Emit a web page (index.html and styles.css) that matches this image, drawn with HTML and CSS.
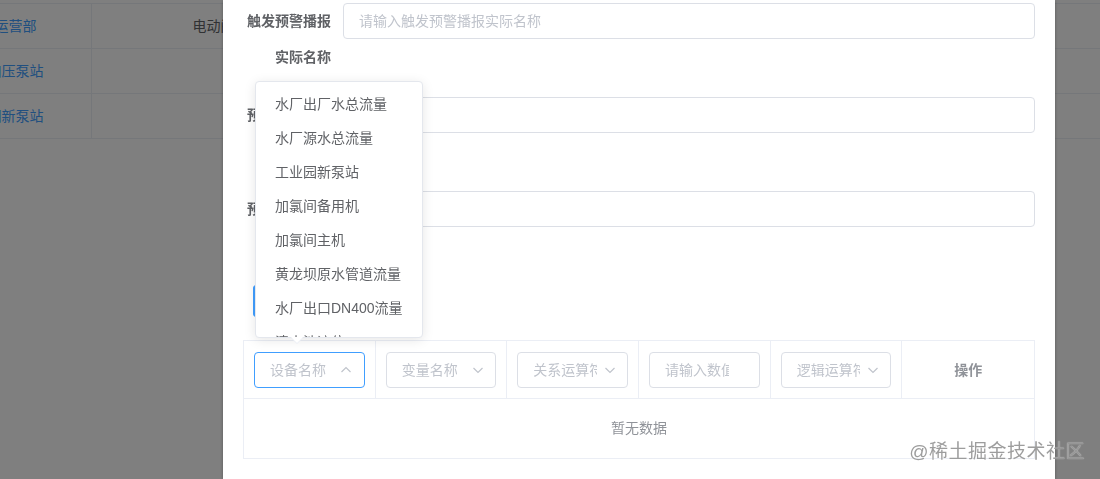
FILE: index.html
```html
<!DOCTYPE html>
<html lang="zh-CN">
<head>
<meta charset="utf-8">
<title>预警配置</title>
<link rel="stylesheet" href="styles.css">
</head>
<body>
  <div class="page">
    <div class="bg-table">
      <div class="bg-row">
        <div class="bg-cell c1 link">生产运营部</div>
        <div class="bg-cell c2">电动阀门</div>
        <div class="bg-cell c3"></div>
      </div>
      <div class="bg-row">
        <div class="bg-cell c1 link">城东加压泵站</div>
        <div class="bg-cell c2"></div>
        <div class="bg-cell c3"></div>
      </div>
      <div class="bg-row">
        <div class="bg-cell c1 link">工业园新泵站</div>
        <div class="bg-cell c2"></div>
        <div class="bg-cell c3"></div>
      </div>
    </div>
  </div>

  <div class="overlay"></div>

  <div class="dialog">
    <div class="form-item">
      <label class="label">触发预警播报实际名称</label>
      <div class="input placeholder">请输入触发预警播报实际名称</div>
    </div>
    <div class="form-item">
      <label class="label">预警恢复播报实际名称</label>
      <div class="input"></div>
    </div>
    <div class="form-item">
      <label class="label">预警持续播报实际名称</label>
      <div class="input"></div>
    </div>
    <div class="actions">
      <button class="btn">添加条件</button>
    </div>

    <div class="cond-table">
      <div class="cond-head">
        <div class="th">
          <div class="select focus"><span class="sel-text">设备名称</span>
            <span class="arrow"><svg viewBox="0 0 14 14" width="14" height="14"><polyline points="2.5,9 7,4.5 11.5,9" fill="none" stroke="#c0c4cc" stroke-width="1.2"/></svg></span>
          </div>
        </div>
        <div class="th">
          <div class="select"><span class="sel-text">变量名称</span>
            <span class="arrow"><svg viewBox="0 0 14 14" width="14" height="14"><polyline points="2.5,5 7,9.5 11.5,5" fill="none" stroke="#c0c4cc" stroke-width="1.2"/></svg></span>
          </div>
        </div>
        <div class="th">
          <div class="select"><span class="sel-text">关系运算符</span>
            <span class="arrow"><svg viewBox="0 0 14 14" width="14" height="14"><polyline points="2.5,5 7,9.5 11.5,5" fill="none" stroke="#c0c4cc" stroke-width="1.2"/></svg></span>
          </div>
        </div>
        <div class="th">
          <div class="select"><span class="sel-text">请输入数值</span></div>
        </div>
        <div class="th">
          <div class="select"><span class="sel-text">逻辑运算符</span>
            <span class="arrow"><svg viewBox="0 0 14 14" width="14" height="14"><polyline points="2.5,5 7,9.5 11.5,5" fill="none" stroke="#c0c4cc" stroke-width="1.2"/></svg></span>
          </div>
        </div>
        <div class="th op">操作</div>
      </div>
      <div class="cond-empty">暂无数据</div>
    </div>

    <div class="dropdown">
      <ul class="dropdown-list">
        <li>水厂出厂水总流量</li>
        <li>水厂源水总流量</li>
        <li>工业园新泵站</li>
        <li>加氯间备用机</li>
        <li>加氯间主机</li>
        <li>黄龙坝原水管道流量</li>
        <li>水厂出口DN400流量</li>
        <li>清水池液位</li>
      </ul>
      <span class="popper-arrow"></span>
    </div>
  </div>

  <div class="watermark">@稀土掘金技术社区</div>
</body>
</html>
```

FILE: styles.css
```css
* { box-sizing: border-box; }

html, body {
  margin: 0;
  padding: 0;
  width: 1100px;
  height: 479px;
  overflow: hidden;
  background: #fff;
  font-family: "Liberation Sans", "Noto Sans CJK SC", sans-serif;
  font-size: 14px;
  color: #606266;
}

.page {
  padding-top: 3px;
}

.bg-table {
  margin-left: -88px;
  width: 1188px;
  border-top: 1px solid #ebeef5;
}

.bg-row {
  display: flex;
  height: 45px;
  border-bottom: 1px solid #ebeef5;
}

.bg-cell {
  line-height: 44px;
  text-align: center;
  white-space: nowrap;
}

.c1 { width: 180px; border-right: 1px solid #ebeef5; }
.c2 { width: 258px; border-right: 1px solid #ebeef5; }
.c3 { flex: 1; }

.link { color: #409eff; }

.overlay {
  position: fixed;
  inset: 0;
  background: rgba(0, 0, 0, 0.5);
}

.dialog {
  position: absolute;
  left: 223px;
  top: 0;
  width: 832px;
  height: 479px;
  background: #fff;
  box-shadow: 0 1px 3px rgba(0, 0, 0, 0.3);
  padding: 3px 20px 0;
}

.form-item {
  display: flex;
  align-items: flex-start;
  margin-bottom: 22px;
}

.label {
  width: 100px;
  flex: none;
  padding-right: 12px;
  text-align: right;
  line-height: 36px;
  font-weight: 700;
  color: #606266;
}

.input {
  flex: 1;
  height: 36px;
  border: 1px solid #dcdfe6;
  border-radius: 4px;
  padding: 0 15px;
  line-height: 34px;
  color: #606266;
}

.placeholder { color: #c0c4cc; }

.actions {
  margin: 1px 0 23px;
  padding-left: 10px;
  height: 32px;
}

.btn {
  height: 32px;
  padding: 0 15px;
  border: 1px solid #409eff;
  border-radius: 3px;
  background: #409eff;
  color: #fff;
  font: inherit;
  font-size: 12px;
}

.cond-table {
  width: 792px;
  border: 1px solid #ebeef5;
}

.cond-head {
  display: grid;
  grid-template-columns: repeat(6, minmax(0, 1fr));
  border-bottom: 1px solid #ebeef5;
}

.th {
  min-width: 0;
  padding: 11px 10px 10px;
  border-right: 1px solid #ebeef5;
}

.th:last-child { border-right: none; }

.th.op {
  line-height: 36px;
  text-align: center;
  font-weight: 700;
  color: #909399;
}

.select {
  position: relative;
  width: 100%;
  height: 36px;
  border: 1px solid #dcdfe6;
  border-radius: 4px;
  padding: 0 30px 0 15px;
  line-height: 34px;
  color: #c0c4cc;
  white-space: nowrap;
  overflow: hidden;
}

.sel-text {
  display: block;
  overflow: hidden;
  white-space: nowrap;
}

.select.focus { border-color: #409eff; }

.arrow {
  position: absolute;
  right: 5px;
  top: 0;
  width: 25px;
  height: 34px;
  display: flex;
  align-items: center;
  justify-content: center;
}

.arrow svg { display: block; }

.cond-empty {
  height: 59px;
  line-height: 59px;
  text-align: center;
  color: #909399;
}

.dropdown {
  position: absolute;
  left: 32px;
  top: 81px;
  width: 168px;
  height: 257px;
  background: #fff;
  border: 1px solid #e4e7ed;
  border-radius: 4px;
  box-shadow: 0 2px 12px rgba(0, 0, 0, 0.1);
}

.dropdown-list {
  list-style: none;
  margin: 0;
  padding: 5px 0 0;
  height: 100%;
  overflow: hidden;
  border-radius: 4px;
}

.dropdown-list li {
  height: 34px;
  line-height: 34px;
  padding: 0 19px;
  color: #606266;
  white-space: nowrap;
}

.popper-arrow {
  position: absolute;
  left: 35px;
  bottom: -7px;
  width: 0;
  height: 0;
  border-left: 6px solid transparent;
  border-right: 6px solid transparent;
  border-top: 6px solid #ebeef5;
}

.popper-arrow::after {
  content: "";
  position: absolute;
  left: -6px;
  top: -7px;
  width: 0;
  height: 0;
  border-left: 6px solid transparent;
  border-right: 6px solid transparent;
  border-top: 6px solid #fff;
}

.watermark {
  position: fixed;
  right: 15px;
  bottom: 15px;
  font-size: 19px;
  line-height: 24px;
  color: rgba(140, 140, 140, 0.85);
  text-shadow: 0 0 1px rgba(255, 255, 255, 0.8);
  letter-spacing: 0.5px;
  white-space: nowrap;
}
```
